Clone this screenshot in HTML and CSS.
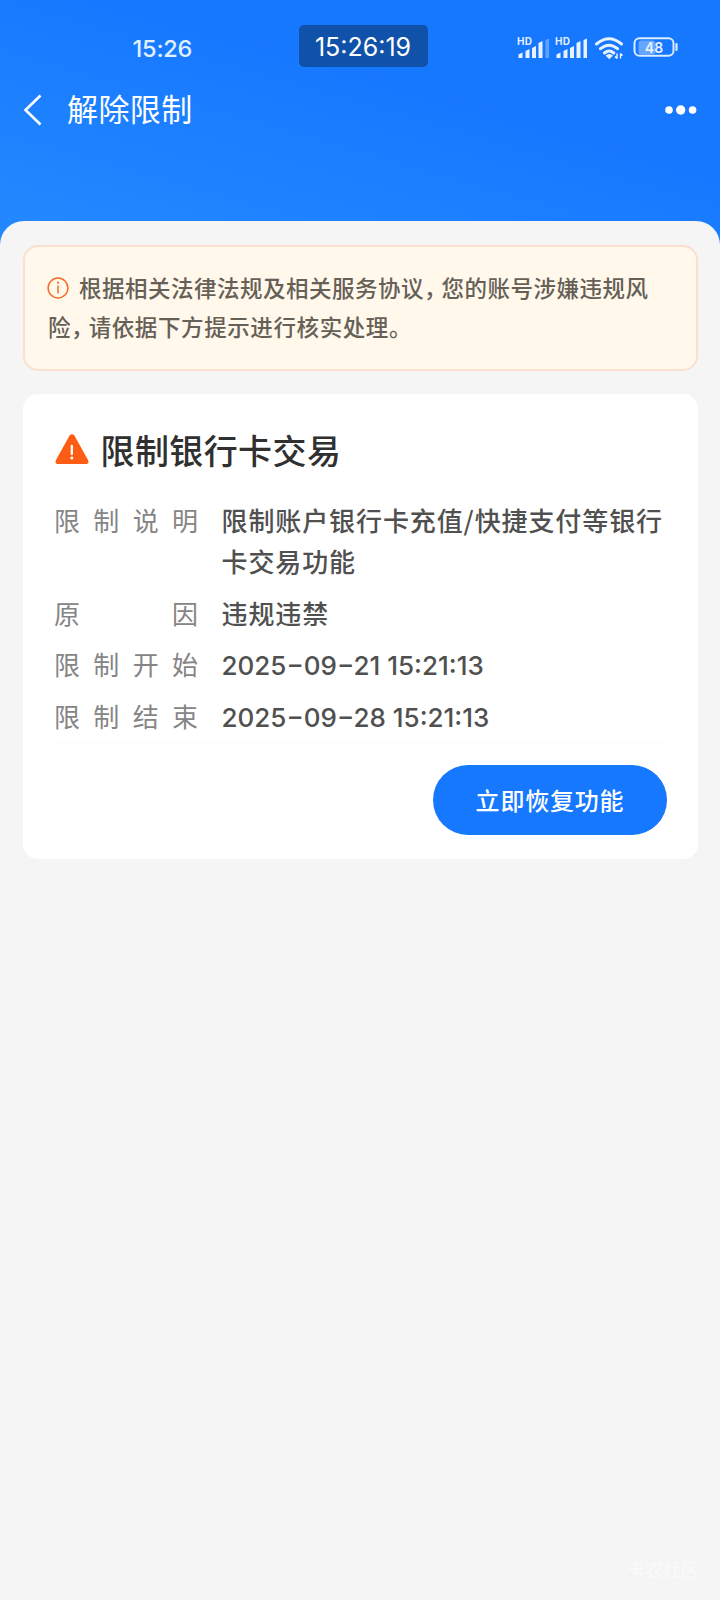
FILE: index.html
```html
<!DOCTYPE html>
<html lang="zh-CN">
<head>
<meta charset="utf-8">
<title>解除限制</title>
<link rel="stylesheet" href="styles.css">
</head>
<body>
<div class="page">
  <header class="header">
    <div class="status">
      <span class="clock">15:26</span>
      <span class="timer">15:26:19</span>
      <svg class="indicators" width="162" height="26" viewBox="0 0 162 26">
        <g fill="#fff" fill-opacity=".9">
          <text class="hd" x="0" y="9" textLength="15">HD</text>
          <text class="hd" x="38" y="9" textLength="15">HD</text>
          <path d="M1.500 22v-3.500l4-2v5.500zM8.500 22v-7l4-2v9zM15 22v-10l4-2v12zM21.500 22V7l4-2v17z"/>
          <path d="M28.500 4l3.500-1.500V22h-3.500z" opacity=".35"/>
          <path d="M39.500 22v-3.500l4-2v5.500zM46.500 22v-7l4-2v9zM53 22v-10l4-2v12zM59.500 22V7l4-2v17zM66.500 4l3.500-1.500V22h-3.500z"/>
          <path d="M88.500 19.500q4-3 7.500 0l-3.700 3.700z"/>
          <path d="M100 17.500v5M100 22.500l-2-2M103.500 22.500v-5M103.500 17.500l2 2" stroke="#fff" stroke-width="1.300" fill="none"/>
        </g>
        <g fill="none" stroke="#fff" stroke-opacity=".9" stroke-width="3" stroke-linecap="round">
          <path d="M79.500 8q12.500-10.500 25 0M83.500 12.700q8.500-7 17 0M87.500 17q4.700-4 9.300 0"/>
        </g>
        <rect x="121.500" y="4.500" width="17" height="14" rx="3" fill="#fff" opacity=".35"/>
        <rect x="117.500" y="2.200" width="39" height="17.600" rx="5" fill="none" stroke="#d9edff" stroke-width="2"/>
        <path d="M159.500 8v6" stroke="#d9edff" stroke-width="2.200" stroke-linecap="round"/>
        <text class="battery" x="137" y="16.500" text-anchor="middle">48</text>
      </svg>
    </div>
    <nav class="nav">
      <svg class="back" width="20" height="32" viewBox="0 0 20 32"><path d="M17.500 1.500 2.500 16l15 14.500" fill="none" stroke="#fff" stroke-width="2.600"/></svg>
      <h1 class="nav-title">解除限制</h1>
      <svg class="more" width="34" height="12" viewBox="0 0 34 12" fill="#fff"><circle cx="5" cy="6" r="3.800"/><circle cx="16.700" cy="6" r="4.700"/><circle cx="28.600" cy="6" r="3.800"/></svg>
    </nav>
  </header>
  <main class="sheet">
    <section class="notice">
      <svg class="info" width="22" height="22" viewBox="0 0 22 22"><circle cx="11" cy="11" r="9.900" fill="none" stroke="#f76b2b" stroke-width="1.500"/><path d="M11 8.500v8" stroke="#f76b2b" stroke-width="1.500"/><circle cx="11" cy="5.700" r="1.100" fill="#f76b2b"/></svg>根据相关法律法规及相关服务协议<span class="comma">，</span>您的账号涉嫌违规风<br><span class="second">险<span class="comma">，</span>请依据下方提示进行核实处理。</span>
    </section>
    <section class="card">
      <h2 class="card-title">
        <svg width="34" height="30" viewBox="0 0 34 30"><path d="M14.600 1.600Q17-1.200 19.400 1.600L33 26q1.700 4-2.500 4h-27Q-.7 30 1 26z" fill="#fc5c13"/><path d="M16.800 12v8" stroke="#fff" stroke-width="2.300" stroke-linecap="round"/><circle cx="16.800" cy="24" r="1.500" fill="#fff"/></svg>
        <span>限制银行卡交易</span>
      </h2>
      <dl class="details">
        <dt>限制说明</dt><dd>限制账户银行卡充值/快捷支付等银行卡交易功能</dd>
        <dt>原因</dt><dd>违规违禁</dd>
        <dt>限制开始</dt><dd class="date">2025−09−21 15:21:13</dd>
        <dt>限制结束</dt><dd class="date">2025−09−28 15:21:13</dd>
      </dl>
      <div class="actions"><button class="restore">立即恢复功能</button></div>
    </section>
  </main>
  <div class="watermark">卡农社区</div>
</div>
</body>
</html>
```

FILE: styles.css
```css
* { box-sizing: border-box; }
body {
  margin: 0;
  background: #f5f5f5;
  font-family: "Noto Sans CJK SC", sans-serif;
}
.page {
  position: relative;
  width: 720px;
  height: 1600px;
  overflow: hidden;
  background: #2388ff;
}
.header {
  height: 221px;
  padding-top: 25px;
  color: #fff;
}
.page::before {
  content: "";
  position: absolute;
  inset: 0 0 auto;
  height: 250px;
  background: linear-gradient(196deg, #1677ff 0, #1677ff 35%, #2388ff 92%);
}
.header, .sheet { position: relative; }
.status { display: flex; height: 42px; }
.clock {
  width: 166px;
  margin-left: 132.500px;
  font: 500 23.5px/48px Inter, sans-serif;
  letter-spacing: -.2px;
  color: #e2f1ff;
}
.timer {
  width: 129px;
  height: 42px;
  border-radius: 5px;
  background: #1051aa;
  font: 400 25px/44px Inter, sans-serif;
  text-align: center;
}
.indicators { margin: 11px 0 0 89.500px; }
.hd { font: 700 10px Inter, sans-serif; }
.battery { font: 600 14px Inter, sans-serif; fill: #e6f4ff; }
.nav { display: flex; align-items: center; height: 60px; margin-top: 13px; padding: 0 22px 0 23px; }
.nav-title { flex: 1; margin: -4px 0 0 24px; font-size: 31px; font-weight: 400; line-height: 44px; letter-spacing: .4px; }
.sheet {
  height: 1379px;
  padding: 24px 22px 0 23px;
  border-radius: 24px 24px 0 0;
  background: #f5f5f5;
}
.notice {
  height: 126px;
  padding: 21px 0 0 22px;
  border: 2px solid #fbdfd0;
  border-radius: 15px;
  background: #fff8eb;
  color: #666057;
  font-size: 22.5px;
  font-weight: 500;
  line-height: 39px;
  letter-spacing: .5px;
  white-space: nowrap;
}
.info { margin-right: 10px; vertical-align: -2px; }
.comma { letter-spacing: -5px; }
.second { margin-left: 1px; letter-spacing: .6px; }
.second .comma { letter-spacing: -5px; }
.card {
  height: 465px;
  margin-top: 23px;
  padding: 32px 31px 0 32px;
  border-radius: 15px;
  background: #fff;
}
.card-title {
  display: flex;
  align-items: center;
  gap: 11.500px;
  height: 48px;
  margin: 0;
  color: #303030;
  font-size: 34px;
  font-weight: 500;
  line-height: 48px;
  letter-spacing: .4px;
}
.card-title svg { margin-top: -3px; }
.details {
  display: grid;
  grid-template-columns: 143px 1fr;
  column-gap: 24px;
  row-gap: 10.500px;
  height: 244px;
  margin: 25px 0 0;
  border-bottom: 1px solid #fafafa;
  align-content: start;
  font-size: 26px;
  line-height: 41px;
}
.details dt { margin-left: -1px; color: #858585; text-align-last: justify; text-align: justify; }
.details dd { margin: 0 -8px 0 -.5px; color: #505050; font-weight: 500; letter-spacing: .9px; }
.details .date { padding-top: 2px; font-family: Inter, sans-serif; line-height: 39px; white-space: nowrap; letter-spacing: 0; position: relative; top: 1px; }
.actions { display: flex; justify-content: flex-end; padding-top: 22px; }
.restore {
  width: 234px;
  height: 70px;
  padding: 0;
  border: 0;
  border-radius: 35px;
  background: #1677ff;
  color: #fff;
  font: 500 24px/70px "Noto Sans CJK SC", sans-serif;
  letter-spacing: .8px;
}
.watermark {
  position: absolute;
  right: 21px;
  bottom: 18px;
  color: #fbfbfb;
  font-size: 18px;
  line-height: 26px;
}
```
